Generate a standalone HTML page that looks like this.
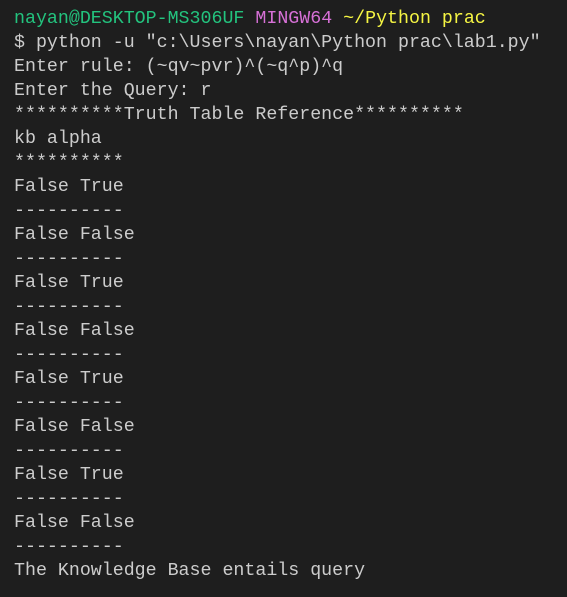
<!DOCTYPE html>
<html><head><style>
html,body{margin:0;padding:0;background:#1e1e1e;width:567px;height:597px;overflow:hidden}
pre{margin:0;position:absolute;left:14px;top:7px;font-family:"Liberation Mono",monospace;font-size:18.3px;line-height:24px;color:#cccccc}
.g{color:#23c37e}.m{color:#d670d6}.y{color:#f5f543}
</style></head><body><pre><span class="g">nayan@DESKTOP-MS306UF</span> <span class="m">MINGW64</span> <span class="y">~/Python prac</span>
$ python -u "c:\Users\nayan\Python prac\lab1.py"
Enter rule: (~qv~pvr)^(~q^p)^q
Enter the Query: r
**********Truth Table Reference**********
kb alpha
**********
False True
----------
False False
----------
False True
----------
False False
----------
False True
----------
False False
----------
False True
----------
False False
----------
The Knowledge Base entails query</pre></body></html>
